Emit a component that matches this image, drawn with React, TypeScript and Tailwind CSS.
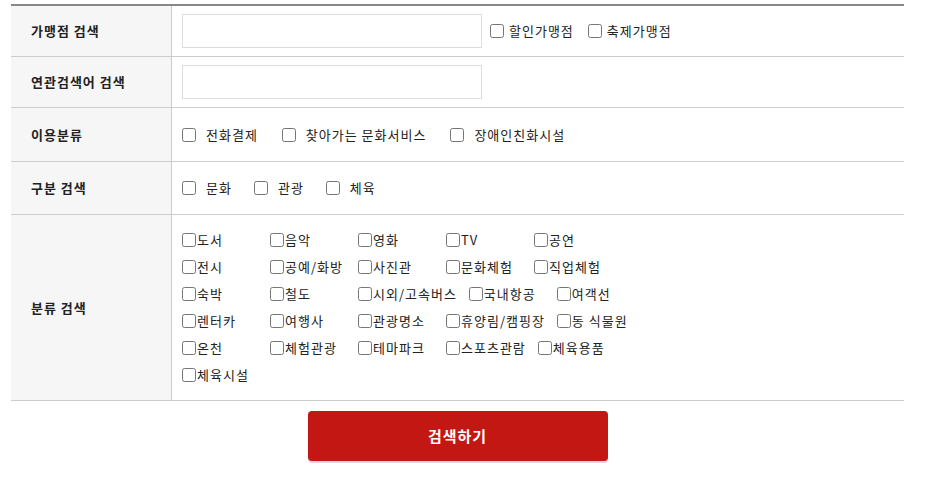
const FONT = "font-['Malgun_Gothic','Noto_Sans_CJK_KR',sans-serif]";

const CATEGORY_ROWS = [
  ["도서", "음악", "영화", "TV", "공연"],
  ["전시", "공예/화방", "사진관", "문화체험", "직업체험"],
  ["숙박", "철도", "시외/고속버스", "국내항공", "여객선"],
  ["렌터카", "여행사", "관광명소", "휴양림/캠핑장", "동 식물원"],
  ["온천", "체험관광", "테마파크", "스포츠관람", "체육용품"],
  ["체육시설"],
];

function Check({ label, gap = "ml-[10px]", after = "mr-[24px]" }: { label: string; gap?: string; after?: string }) {
  return (
    <label className={`flex items-center ${after}`}>
      <input type="checkbox" className="m-0 w-[14px] h-[14px]" />
      <span className={gap}>{label}</span>
    </label>
  );
}

function Row({ title, height, children }: { title: string; height: string; children: React.ReactNode }) {
  return (
    <div className={`flex border-b border-[#cccccc] ${height}`}>
      <div className="w-[161px] shrink-0 bg-[#f6f6f6] border-r border-[#cccccc] flex items-center pl-[20px] font-bold text-[#222]">
        {title}
      </div>
      <div className="flex-1 flex items-center pl-[10px]">{children}</div>
    </div>
  );
}

export default function App() {
  return (
    <div className={`${FONT} text-[13px] leading-[18px] tracking-[1px] text-[#222] bg-white w-[927px] h-[482px]`}>
      <div className="ml-[11px] pt-[4px] w-[893px]">
        <div className="border-t-2 border-[#888888]">
          <Row title="가맹점 검색" height="h-[51px]">
            <input type="text" className="w-[300px] h-[34px] border border-[#dddddd] outline-none" />
            <div className="flex items-center ml-[8px]">
              <Check label="할인가맹점" gap="ml-[5px]" after="mr-[14px]" />
              <Check label="축제가맹점" gap="ml-[5px]" after="" />
            </div>
          </Row>
          <Row title="연관검색어 검색" height="h-[51px]">
            <input type="text" className="w-[300px] h-[34px] border border-[#dddddd] outline-none" />
          </Row>
          <Row title="이용분류" height="h-[54px]">
            <Check label="전화결제" />
            <Check label="찾아가는 문화서비스" />
            <Check label="장애인친화시설" />
          </Row>
          <Row title="구분 검색" height="h-[53px]">
            <Check label="문화" after="mr-[22px]" />
            <Check label="관광" after="mr-[22px]" />
            <Check label="체육" />
          </Row>
          <Row title="분류 검색" height="h-[186px]">
            <div className="flex flex-col">
              {CATEGORY_ROWS.map((row, i) => (
                <div key={i} className="flex h-[27px] items-center">
                  {row.map((item) => (
                    <label key={item} className="flex items-center min-w-[76px] mr-[12px]">
                      <input type="checkbox" className="m-0 w-[14px] h-[14px]" />
                      <span className="ml-[1px]">{item}</span>
                    </label>
                  ))}
                </div>
              ))}
            </div>
          </Row>
        </div>
        <div className="flex justify-center mt-[10px]">
          <button className="w-[300px] h-[50px] rounded-[4px] bg-[#c21713] text-white font-bold text-[15px] tracking-[1px] shadow-[0_2px_0_#d9d9d9]">
            검색하기
          </button>
        </div>
      </div>
    </div>
  );
}
